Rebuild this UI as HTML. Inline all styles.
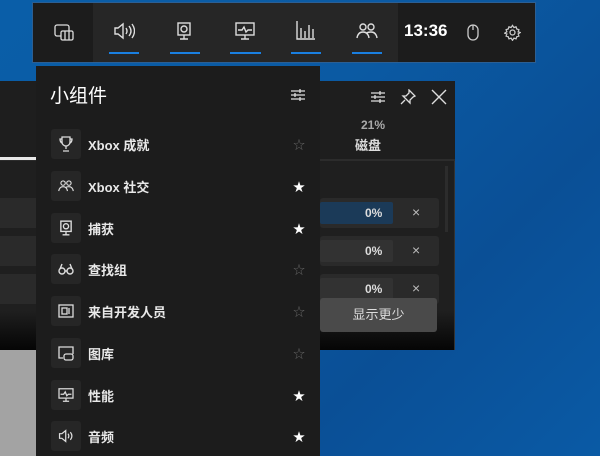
<!DOCTYPE html>
<html><head><meta charset="utf-8"><style>
*{margin:0;padding:0;box-sizing:border-box}
body{width:600px;height:456px;overflow:hidden;position:relative;font-family:"Liberation Sans","Noto Sans CJK SC",sans-serif;background:linear-gradient(135deg,#0a5ea8 0%,#0b5aa3 40%,#0a4f96 70%,#0a5aa5 100%);color:#fff}
.abs{position:absolute}
svg{position:absolute}
.row{position:absolute;left:51px;width:260px;height:30px}
.ib{position:absolute;left:0;top:0;width:30px;height:30px;background:#262626;border-radius:3px}
.rt{position:absolute;left:37px;top:6px;font-size:13px;font-weight:bold;color:#e8e8e8;white-space:nowrap}
.st{position:absolute;left:242px;top:7px;font-size:12px}
</style></head><body>
<div class="abs" style="left:0;top:350px;width:36px;height:106px;background:#a3a3a3"></div>
<div class="abs" style="left:0;top:81px;width:455px;height:269px;background:linear-gradient(#1f1f1f 0,#1f1f1f 230px,#050505 269px);border-right:1px solid #333"></div>
<div class="abs" style="left:0;top:81px;width:455px;height:79px;background:#1e1e1e"></div>
<div class="abs" style="left:0;top:159px;width:455px;height:2px;background:#2c2c2c"></div>
<div class="abs" style="left:0;top:157px;width:36px;height:3px;background:#e8e8e8"></div>
<div class="abs" style="left:0;top:198px;width:36px;height:30px;background:#2a2a2a"></div>
<div class="abs" style="left:0;top:236px;width:36px;height:30px;background:#2a2a2a"></div>
<div class="abs" style="left:0;top:274px;width:36px;height:30px;background:#2a2a2a"></div>
<div class="abs" style="left:445px;top:166px;width:3px;height:66px;background:#2c2c2c"></div>
<svg style="left:370px;top:89px" width="16" height="16" viewBox="0 0 16 16" stroke="#ddd" stroke-width="1.3" fill="none"><path d="M1 4h14M1 8h14M1 12h14"/><path d="M10 2v4M5 6v4M10 10v4"/></svg>
<svg style="left:400px;top:89px" width="16" height="16" viewBox="0 0 16 16" stroke="#ddd" stroke-width="1.3" fill="none"><path d="M9 1l6 6-2 1-3 3 0 3-7-7 3 0 3-3z M5 11l-4 4"/></svg>
<svg style="left:431px;top:89px" width="16" height="16" viewBox="0 0 16 16" stroke="#ddd" stroke-width="1.4"><path d="M1 1l14 14M15 1L1 15"/></svg>
<div class="abs" style="left:361px;top:118px;font-size:12px;color:#aaa;font-weight:bold">21%</div>
<div class="abs" style="left:355px;top:135px;font-size:13px;color:#ddd;font-weight:bold">磁盘</div>
<div class="abs" style="left:320px;top:198px;width:119px;height:30px;background:#2a2a2a;border-radius:3px"></div>
<div class="abs" style="left:320px;top:202px;width:73px;height:22px;background:#1b3a58;border-radius:2px"></div>
<div class="abs" style="left:320px;top:236px;width:119px;height:30px;background:#2a2a2a;border-radius:3px"></div>
<div class="abs" style="left:320px;top:240px;width:73px;height:22px;background:#323232;border-radius:2px"></div>
<div class="abs" style="left:320px;top:274px;width:119px;height:30px;background:#2a2a2a;border-radius:3px"></div>
<div class="abs" style="left:320px;top:278px;width:73px;height:22px;background:#323232;border-radius:2px"></div>
<div class="abs" style="left:365px;top:206px;font-size:12px;font-weight:bold;color:#ddd">0%</div>
<div class="abs" style="left:365px;top:244px;font-size:12px;font-weight:bold;color:#ddd">0%</div>
<div class="abs" style="left:365px;top:282px;font-size:12px;font-weight:bold;color:#ddd">0%</div>
<div class="abs" style="left:412px;top:204px;font-size:14px;color:#bbb">×</div>
<div class="abs" style="left:412px;top:242px;font-size:14px;color:#bbb">×</div>
<div class="abs" style="left:412px;top:280px;font-size:14px;color:#bbb">×</div>
<div class="abs" style="left:320px;top:298px;width:117px;height:34px;background:#4a4a4a;border-radius:3px;text-align:center;line-height:34px;font-size:13px;color:#ddd">显示更少</div>
<div class="abs" style="left:32px;top:2px;width:504px;height:61px;background:#262626;border:1px solid #2b5f94"></div>
<div class="abs" style="left:33px;top:3px;width:60px;height:59px;background:#1c1c1c"></div>
<div class="abs" style="left:398px;top:3px;width:137px;height:59px;background:#1c1c1c"></div>
<svg style="left:54px;top:24px" width="20" height="18" viewBox="0 0 20 18" stroke="#ddd" stroke-width="1.3" fill="none"><rect x="1" y="1" width="14" height="11" rx="2"/><rect x="7" y="7" width="12" height="9" rx="1.5" fill="#1c1c1c"/><path d="M11 7v9M15 7v9"/></svg>
<svg style="left:113px;top:22px" width="22" height="18" viewBox="0 0 22 18" stroke="#ddd" stroke-width="1.4" fill="none"><path d="M2 6h3l5-4v14l-5-4H2z"/><path d="M13 6q2 3 0 6M16 4q4 5 0 10M19 2q5 7 0 14"/></svg>
<svg style="left:177px;top:22px" width="14" height="18" viewBox="0 0 14 18" stroke="#ddd" stroke-width="1.4" fill="none"><rect x="1" y="1" width="12" height="12"/><circle cx="7" cy="7" r="3"/><path d="M7 13v4M3 17h8"/></svg>
<svg style="left:235px;top:22px" width="20" height="18" viewBox="0 0 20 18" stroke="#ddd" stroke-width="1.4" fill="none"><rect x="1" y="1" width="18" height="12"/><path d="M3 8h4l2-3 2 5 2-2h4M10 13v4M6 17h8"/></svg>
<svg style="left:296px;top:20px" width="20" height="20" viewBox="0 0 20 20" stroke="#ddd" stroke-width="1.4" fill="none"><path d="M1 1v18h18M5 18V8M9 18V11M13 18V5M17 18V9"/></svg>
<svg style="left:356px;top:23px" width="22" height="16" viewBox="0 0 22 16" stroke="#ddd" stroke-width="1.4" fill="none"><circle cx="7" cy="4" r="3"/><circle cx="15" cy="4" r="3"/><path d="M1 15q1-6 6-6t6 6M11 10q1-1 4-1 5 0 6 6"/></svg>
<div class="abs" style="left:109px;top:52px;width:30px;height:2px;background:#1a7fe0"></div>
<div class="abs" style="left:170px;top:52px;width:30px;height:2px;background:#1a7fe0"></div>
<div class="abs" style="left:230px;top:52px;width:31px;height:2px;background:#1a7fe0"></div>
<div class="abs" style="left:291px;top:52px;width:30px;height:2px;background:#1a7fe0"></div>
<div class="abs" style="left:352px;top:52px;width:30px;height:2px;background:#1a7fe0"></div>
<div class="abs" style="left:404px;top:21px;font-size:17px;font-weight:bold;color:#fff">13:36</div>
<svg style="left:467px;top:24px" width="12" height="17" viewBox="0 0 12 17" stroke="#ccc" stroke-width="1.3" fill="none"><rect x="1" y="1" width="10" height="15" rx="5"/><path d="M6 1v5"/></svg>
<svg style="left:504px;top:24px" width="17" height="17" viewBox="0 0 24 24" stroke="#ccc" stroke-width="1.8" fill="none"><circle cx="12" cy="12" r="3.5"/><path d="M12 2l2 3 3-1 1 3 3 1-1 3 3 1-3 2 1 3-3 1-1 3-3-1-2 3-2-3-3 1-1-3-3-1 1-3-3-1 3-2-1-3 3-1 1-3 3 1z"/></svg>
<div class="abs" style="left:36px;top:66px;width:284px;height:390px;background:#1c1c1c"></div>
<div class="abs" style="left:50px;top:81px;font-size:19px;color:#fff">小组件</div>
<svg style="left:290px;top:87px" width="16" height="16" viewBox="0 0 16 16" stroke="#ddd" stroke-width="1.3" fill="none"><path d="M1 4h14M1 8h14M1 12h14"/><path d="M10 2v4M5 6v4M10 10v4"/></svg>

<div class="row" style="top:129px"><div class="ib"></div><div class="rt">Xbox 成就</div><div class="st" style="color:#666">☆</div>
<svg style="left:8px;top:7px" width="14" height="16" viewBox="0 0 14 16" stroke="#ddd" stroke-width="1.3" fill="none"><path d="M3 1h8v5a4 4 0 0 1-8 0zM3 3H1q0 3 2 4M11 3h2q0 3-2 4M7 10v3M4 15h6"/></svg></div>
<div class="row" style="top:171px"><div class="ib"></div><div class="rt">Xbox 社交</div><div class="st">★</div>
<svg style="left:7px;top:9px" width="16" height="12" viewBox="0 0 22 16" stroke="#ddd" stroke-width="1.6" fill="none"><circle cx="7" cy="4" r="3"/><circle cx="15" cy="4" r="3"/><path d="M1 15q1-6 6-6t6 6M11 10q1-1 4-1 5 0 6 6"/></svg></div>
<div class="row" style="top:213px"><div class="ib"></div><div class="rt">捕获</div><div class="st">★</div>
<svg style="left:9px;top:7px" width="12" height="16" viewBox="0 0 14 18" stroke="#ddd" stroke-width="1.6" fill="none"><rect x="1" y="1" width="12" height="12"/><circle cx="7" cy="7" r="3"/><path d="M7 13v4M3 17h8"/></svg></div>
<div class="row" style="top:254px"><div class="ib"></div><div class="rt">查找组</div><div class="st" style="color:#666">☆</div>
<svg style="left:7px;top:9px" width="16" height="12" viewBox="0 0 16 12" stroke="#ddd" stroke-width="1.4" fill="none"><circle cx="4" cy="8" r="3"/><circle cx="12" cy="8" r="3"/><path d="M2 6l2-5M14 6l-2-5M7 8h2"/></svg></div>
<div class="row" style="top:296px"><div class="ib"></div><div class="rt">来自开发人员</div><div class="st" style="color:#666">☆</div>
<svg style="left:7px;top:8px" width="16" height="14" viewBox="0 0 16 14" stroke="#ddd" stroke-width="1.3" fill="none"><rect x="1" y="1" width="14" height="12"/><rect x="4" y="4" width="5" height="6"/><path d="M11 4v6"/></svg></div>
<div class="row" style="top:338px"><div class="ib"></div><div class="rt">图库</div><div class="st" style="color:#666">☆</div>
<svg style="left:7px;top:8px" width="16" height="15" viewBox="0 0 16 15" stroke="#ddd" stroke-width="1.3" fill="none"><path d="M5 12H1V1h14v7"/><rect x="6" y="8" width="9" height="6" rx="2"/></svg></div>
<div class="row" style="top:380px"><div class="ib"></div><div class="rt">性能</div><div class="st">★</div>
<svg style="left:7px;top:8px" width="16" height="14" viewBox="0 0 20 18" stroke="#ddd" stroke-width="1.6" fill="none"><rect x="1" y="1" width="18" height="12"/><path d="M3 8h4l2-3 2 5 2-2h4M10 13v4M6 17h8"/></svg></div>
<div class="row" style="top:421px"><div class="ib"></div><div class="rt">音频</div><div class="st">★</div>
<svg style="left:7px;top:8px" width="17" height="14" viewBox="0 0 22 18" stroke="#ddd" stroke-width="1.6" fill="none"><path d="M2 6h3l5-4v14l-5-4H2z"/><path d="M13 6q2 3 0 6M16 4q4 5 0 10"/></svg></div>
</body></html>
